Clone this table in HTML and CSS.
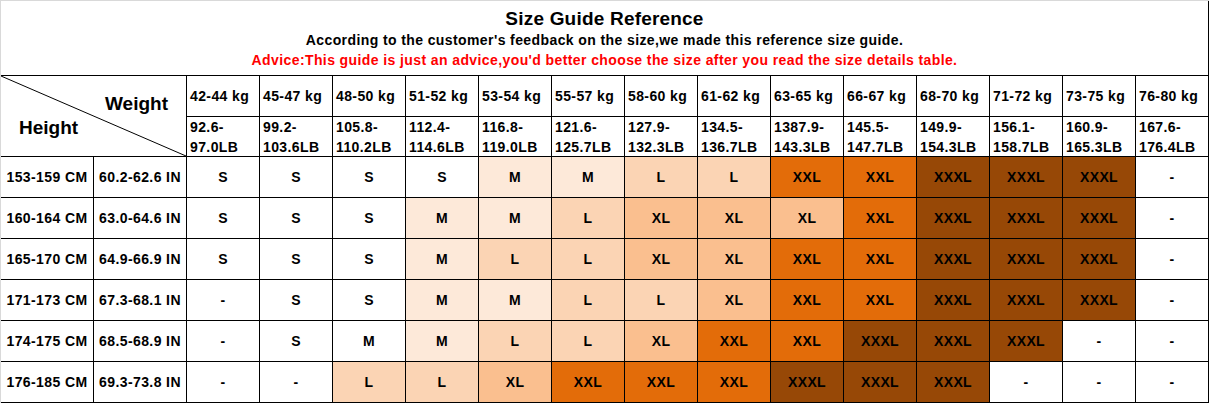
FILE: index.html
```html
<!DOCTYPE html>
<html>
<head>
<meta charset="utf-8">
<link rel="stylesheet" href="styles.css">
</head>
<body>
<div class="sheet">
  <div class="head">
    <div class="title">Size Guide Reference</div>
    <div class="sub">According to the customer's feedback on the size,we made this reference size guide.</div>
    <div class="advice">Advice:This guide is just an advice,you'd better choose the size after you read the size details table.</div>
  </div>
  <div class="grid">
    <div class="corner">
      <svg class="diag" viewBox="0 0 185 80" preserveAspectRatio="none"><line x1="0" y1="0" x2="185" y2="80" stroke="#000" stroke-width="1"/></svg>
      <span class="wt">Weight</span>
      <span class="ht">Height</span>
    </div>
    <div class="kg">42-44 kg</div><div class="kg">45-47 kg</div><div class="kg">48-50 kg</div><div class="kg">51-52 kg</div><div class="kg">53-54 kg</div><div class="kg">55-57 kg</div><div class="kg">58-60 kg</div><div class="kg">61-62 kg</div><div class="kg">63-65 kg</div><div class="kg">66-67 kg</div><div class="kg">68-70 kg</div><div class="kg">71-72 kg</div><div class="kg">73-75 kg</div><div class="kg">76-80 kg</div>
    <div class="lb">92.6-<br>97.0LB</div><div class="lb">99.2-<br>103.6LB</div><div class="lb">105.8-<br>110.2LB</div><div class="lb">112.4-<br>114.6LB</div><div class="lb">116.8-<br>119.0LB</div><div class="lb">121.6-<br>125.7LB</div><div class="lb">127.9-<br>132.3LB</div><div class="lb">134.5-<br>136.7LB</div><div class="lb">1387.9-<br>143.3LB</div><div class="lb">145.5-<br>147.7LB</div><div class="lb">149.9-<br>154.3LB</div><div class="lb">156.1-<br>158.7LB</div><div class="lb">160.9-<br>165.3LB</div><div class="lb">167.6-<br>176.4LB</div>

    <div class="c">153-159 CM</div><div class="c">60.2-62.6 IN</div>
    <div class="c">S</div><div class="c">S</div><div class="c">S</div><div class="c">S</div><div class="c m">M</div><div class="c m">M</div><div class="c l">L</div><div class="c l">L</div><div class="c xxl">XXL</div><div class="c xxl">XXL</div><div class="c x3">XXXL</div><div class="c x3">XXXL</div><div class="c x3">XXXL</div><div class="c">-</div>

    <div class="c">160-164 CM</div><div class="c">63.0-64.6 IN</div>
    <div class="c">S</div><div class="c">S</div><div class="c">S</div><div class="c m">M</div><div class="c m">M</div><div class="c l">L</div><div class="c xl">XL</div><div class="c xl">XL</div><div class="c xl">XL</div><div class="c xxl">XXL</div><div class="c x3">XXXL</div><div class="c x3">XXXL</div><div class="c x3">XXXL</div><div class="c">-</div>

    <div class="c">165-170 CM</div><div class="c">64.9-66.9 IN</div>
    <div class="c">S</div><div class="c">S</div><div class="c">S</div><div class="c m">M</div><div class="c l">L</div><div class="c l">L</div><div class="c xl">XL</div><div class="c xl">XL</div><div class="c xxl">XXL</div><div class="c xxl">XXL</div><div class="c x3">XXXL</div><div class="c x3">XXXL</div><div class="c x3">XXXL</div><div class="c">-</div>

    <div class="c">171-173 CM</div><div class="c">67.3-68.1 IN</div>
    <div class="c">-</div><div class="c">S</div><div class="c">S</div><div class="c m">M</div><div class="c m">M</div><div class="c l">L</div><div class="c l">L</div><div class="c xl">XL</div><div class="c xxl">XXL</div><div class="c xxl">XXL</div><div class="c x3">XXXL</div><div class="c x3">XXXL</div><div class="c x3">XXXL</div><div class="c">-</div>

    <div class="c">174-175 CM</div><div class="c">68.5-68.9 IN</div>
    <div class="c">-</div><div class="c">S</div><div class="c">M</div><div class="c m">M</div><div class="c l">L</div><div class="c l">L</div><div class="c xl">XL</div><div class="c xxl">XXL</div><div class="c xxl">XXL</div><div class="c x3">XXXL</div><div class="c x3">XXXL</div><div class="c x3">XXXL</div><div class="c">-</div><div class="c">-</div>

    <div class="c">176-185 CM</div><div class="c">69.3-73.8 IN</div>
    <div class="c">-</div><div class="c">-</div><div class="c l">L</div><div class="c l">L</div><div class="c xl">XL</div><div class="c xxl">XXL</div><div class="c xxl">XXL</div><div class="c xxl">XXL</div><div class="c x3">XXXL</div><div class="c x3">XXXL</div><div class="c x3">XXXL</div><div class="c">-</div><div class="c">-</div><div class="c">-</div>
  </div>
</div>
</body>
</html>
```

FILE: styles.css
```css
html, body {
  margin: 0;
  padding: 0;
  background: #ffffff;
}
body {
  font-family: "Liberation Sans", Arial, sans-serif;
  font-weight: bold;
  color: #000;
}
.sheet {
  width: 1208px;
  border-top: 1px solid #d9d9d9;
  border-left: 1px solid #d9d9d9;
}
.head {
  height: 74px;
  box-sizing: border-box;
  padding-top: 6px;
  border-right: 1px solid #000;
  text-align: center;
}
.title {
  font-size: 19px;
  line-height: 23px;
  letter-spacing: 0.2px;
}
.sub {
  font-size: 14px;
  line-height: 20px;
  letter-spacing: 0.4px;
}
.advice {
  font-size: 14px;
  line-height: 20px;
  letter-spacing: 0.4px;
  color: #ff0000;
}
.grid {
  display: grid;
  grid-template-columns: 92px 92px repeat(14, 72px);
  grid-template-rows: 40px 39px repeat(6, 40px);
  gap: 1px;
  background: #000;
  padding: 1px 1px 1px 0;
  font-size: 14px;
  letter-spacing: 0.4px;
}
.grid > div {
  background: #fff;
}
.corner {
  grid-column: 1 / 3;
  grid-row: 1 / 3;
  position: relative;
  display: flex;
  flex-direction: column;
  justify-content: center;
  gap: 2px;
  font-size: 19px;
  line-height: 22px;
  letter-spacing: 0;
}
.diag {
  position: absolute;
  left: 0;
  top: 0;
  width: 100%;
  height: 100%;
}
.wt {
  align-self: flex-end;
  margin-right: 18px;
}
.ht {
  align-self: flex-start;
  margin-left: 18px;
}
.kg {
  display: flex;
  align-items: center;
  padding-left: 3px;
  line-height: 20px;
}
.lb {
  display: flex;
  align-items: center;
  padding-left: 3px;
  line-height: 20px;
}
.c {
  display: flex;
  align-items: center;
  justify-content: center;
}
.grid > .m { background: #fde9d9; }
.grid > .l { background: #fbd4b4; }
.grid > .xl { background: #fabf8f; }
.grid > .xxl { background: #e36c09; }
.grid > .x3 { background: #974806; }
```
